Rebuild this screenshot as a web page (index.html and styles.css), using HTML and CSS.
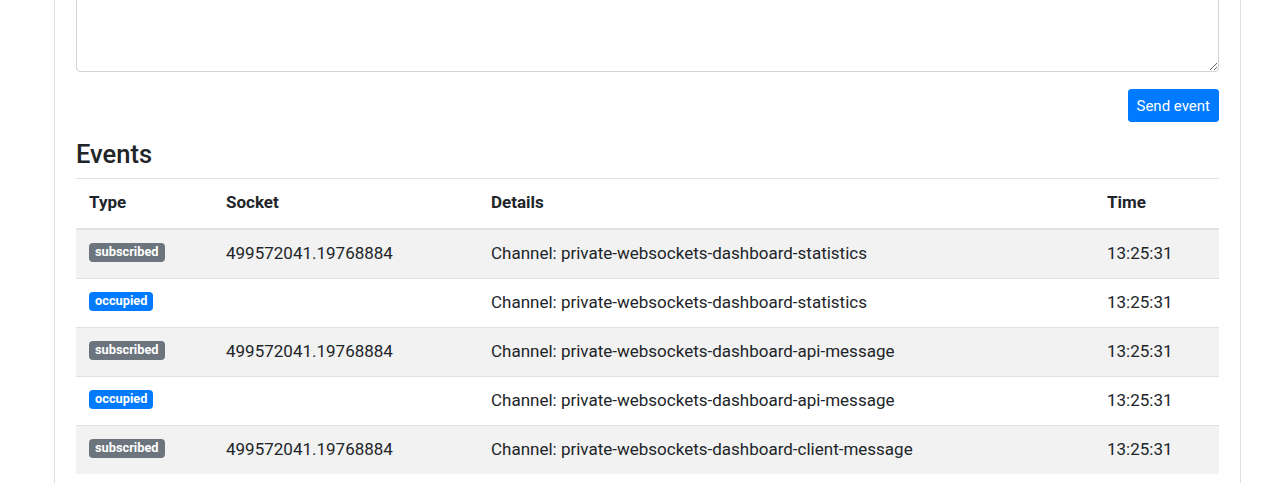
FILE: index.html
```html
<!DOCTYPE html>
<html>
<head>
<meta charset="utf-8">
<link rel="stylesheet" href="styles.css">
</head>
<body>
<div class="page">
  <div class="card">
    <textarea class="event-data"></textarea>
    <div class="actions">
      <button class="btn-send">Send event</button>
    </div>
    <h4 class="title">Events</h4>
    <table class="events">
      <colgroup>
        <col class="c-type"><col class="c-socket"><col class="c-details"><col class="c-time">
      </colgroup>
      <thead>
        <tr><th>Type</th><th>Socket</th><th>Details</th><th>Time</th></tr>
      </thead>
      <tbody>
        <tr><td><span class="badge badge-sub">subscribed</span></td><td>499572041.19768884</td><td>Channel: private-websockets-dashboard-statistics</td><td>13:25:31</td></tr>
        <tr><td><span class="badge badge-occ">occupied</span></td><td></td><td>Channel: private-websockets-dashboard-statistics</td><td>13:25:31</td></tr>
        <tr><td><span class="badge badge-sub">subscribed</span></td><td>499572041.19768884</td><td>Channel: private-websockets-dashboard-api-message</td><td>13:25:31</td></tr>
        <tr><td><span class="badge badge-occ">occupied</span></td><td></td><td>Channel: private-websockets-dashboard-api-message</td><td>13:25:31</td></tr>
        <tr><td><span class="badge badge-sub">subscribed</span></td><td>499572041.19768884</td><td>Channel: private-websockets-dashboard-client-message</td><td>13:25:31</td></tr>
      </tbody>
    </table>
  </div>
</div>
</body>
</html>
```
FILE: styles.css
```css
* { box-sizing: border-box; }
html, body { margin: 0; padding: 0; background: #fff; overflow: hidden; }
body {
  font-family: Roboto, "Liberation Sans", sans-serif;
  font-size: 17px;
  line-height: 24px;
  color: #212529;
}
.page {
  padding: 0 39px 0 54px;
}
.card {
  margin-top: -50px;
  border: 1px solid #dfdfdf;
  border-radius: 4px;
  padding: 21px;
  height: 700px;
}
.event-data {
  display: block;
  width: 100%;
  height: 100px;
  border: 1px solid #ced4da;
  border-radius: 4px;
  margin: 0 0 17px 0;
  padding: 6px 12px;
  font-family: inherit;
  font-size: 16px;
  resize: vertical;
}
.actions {
  display: flex;
  justify-content: flex-end;
}
.btn-send {
  font-family: inherit;
  font-size: 15px;
  line-height: 22px;
  padding: 4px 8px;
  height: 33px;
  color: #fff;
  background: #007bff;
  border: 1px solid #007bff;
  border-radius: 3px;
}
.title {
  margin: 18px 0 9px 0;
  font-size: 25.5px;
  font-weight: 500;
  line-height: 29px;
}
.events {
  width: 100%;
  border-collapse: collapse;
  table-layout: fixed;
}
.c-type { width: 137px; }
.c-socket { width: 265px; }
.c-details { width: 616px; }
.c-time { width: 125px; }
.events th, .events td {
  padding: 11px 12px 13px 13px;
  text-align: left;
  vertical-align: top;
  border-top: 1px solid #dee2e6;
  white-space: nowrap;
}
.events th { font-weight: 700; padding-bottom: 14px; }
.events thead th {
  border-bottom: 2px solid #dee2e6;
}
.events tbody tr:nth-child(odd) { background: #f2f2f2; }
.badge {
  display: inline-block;
  padding: 3px 6px;
  font-size: 12.8px;
  font-weight: 700;
  line-height: 1;
  color: #fff;
  border-radius: 4px;
  vertical-align: 3px;
}
.badge-sub { background: #6c757d; }
.badge-occ { background: #007bff; }
```
